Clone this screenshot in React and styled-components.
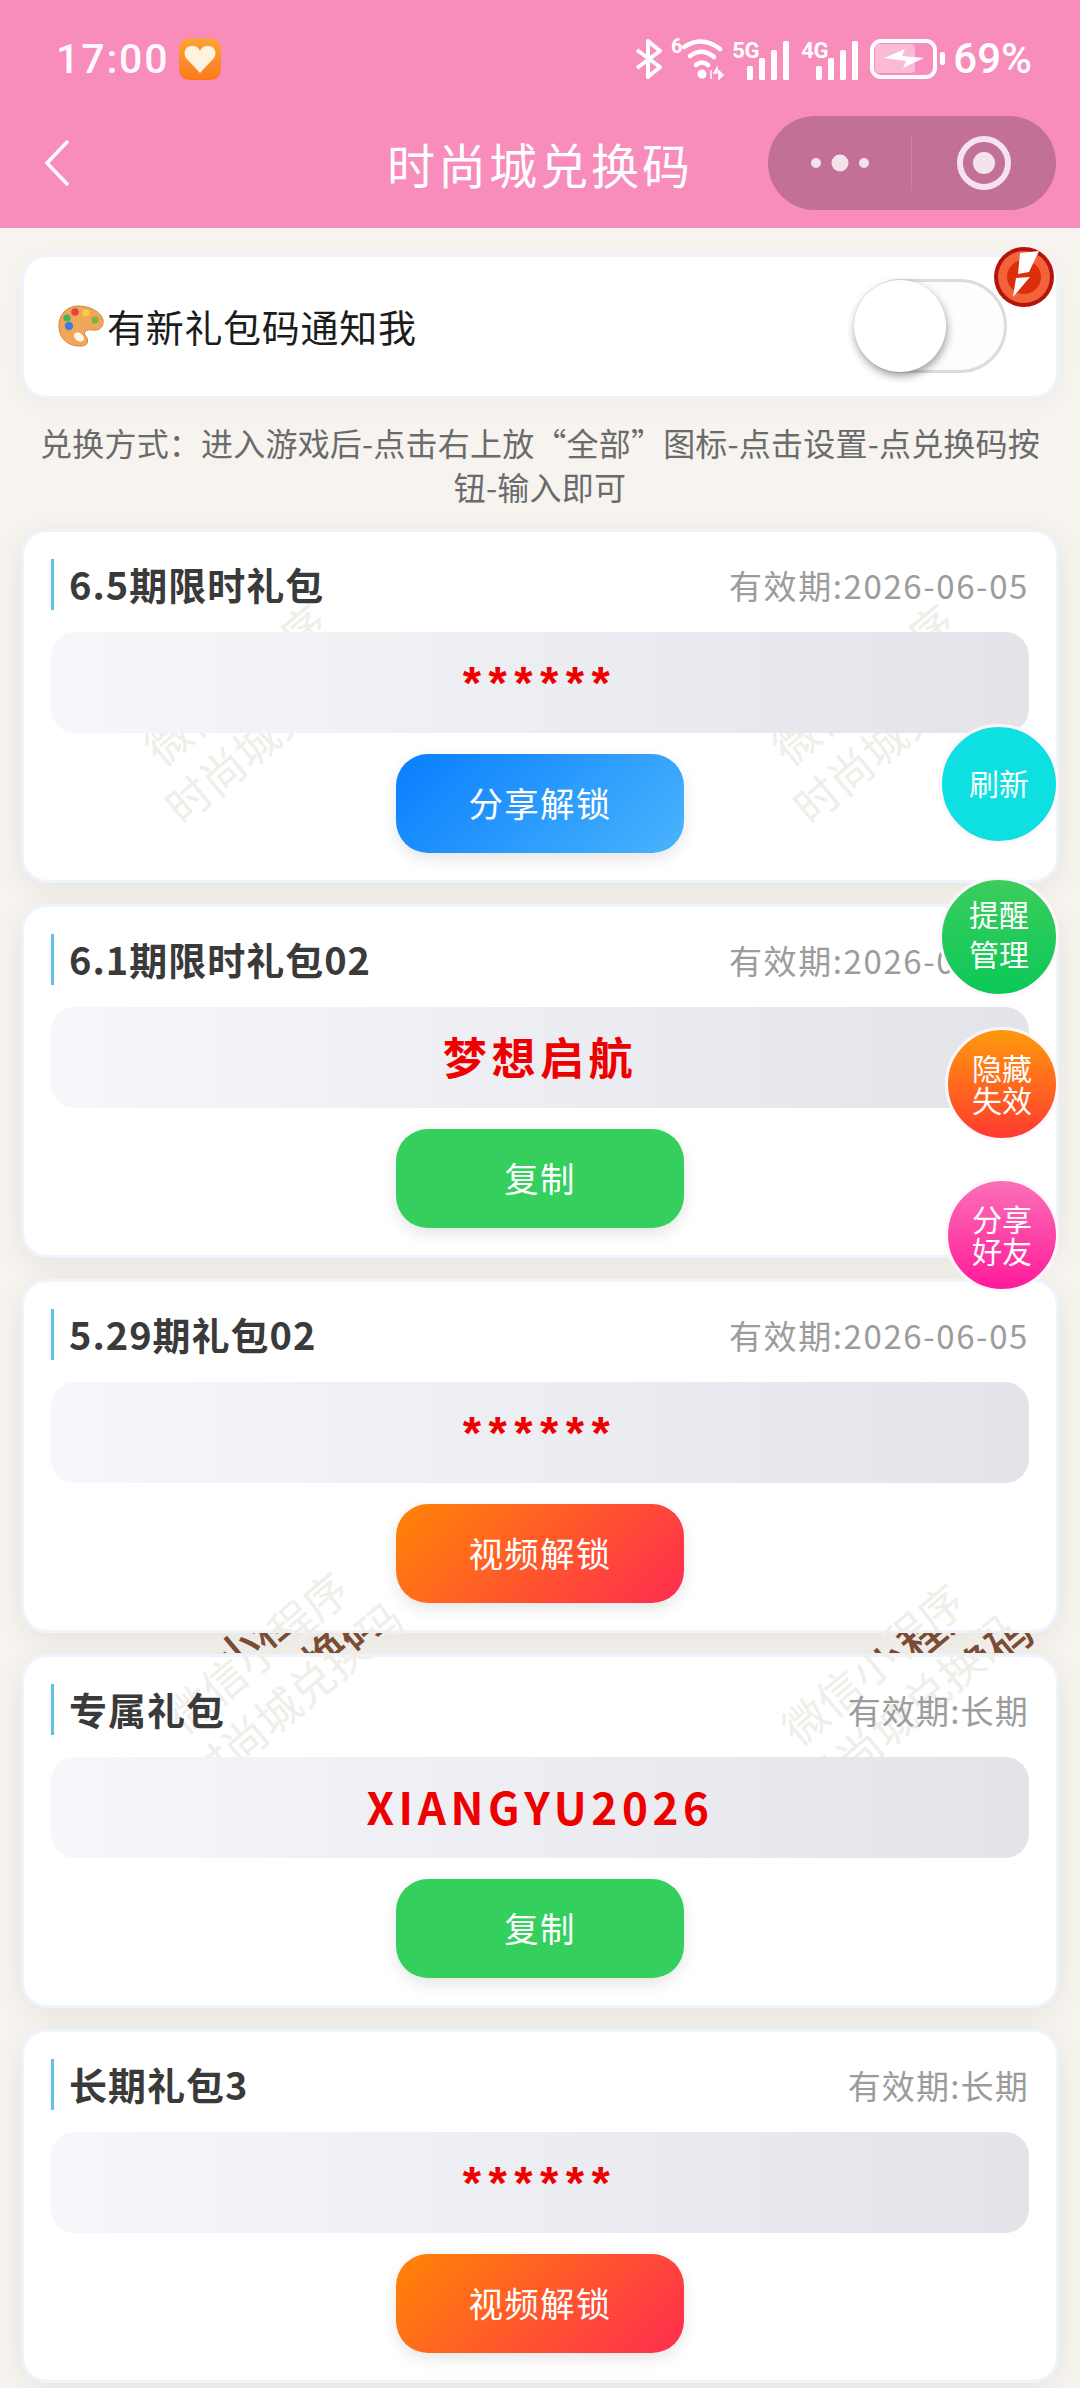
import React from "react";
import styled, { createGlobalStyle } from "styled-components";

const GlobalStyle = createGlobalStyle`
  html, body {
    margin: 0;
    padding: 0;
    background: #f7f4f0;
  }
  * {
    box-sizing: border-box;
  }
  body {
    font-family: "Noto Sans CJK SC", "Noto Sans", sans-serif;
  }
`;

const Page = styled.div`
  position: relative;
  width: 1080px;
  height: 2388px;
  overflow: hidden;
  background: #f7f4f0;
`;

const Header = styled.header`
  height: 228px;
  background: #f88cbb;
  color: #fff;
`;

const StatusBar = styled.div`
  height: 116px;
  padding: 38px 48px 0 56px;
  display: flex;
  justify-content: space-between;
  align-items: flex-start;
`;

const StatusLeft = styled.div`
  display: flex;
  align-items: center;
  gap: 9px;
`;

const Time = styled.span`
  font-family: "Roboto", sans-serif;
  font-size: 41px;
  line-height: 42px;
  letter-spacing: 1.9px;
  font-weight: 500;
  opacity: 0.95;
`;

const StatusRight = styled.div`
  display: flex;
  align-items: center;
  height: 42px;
`;

const SignalGroup = styled.div`
  position: relative;
  width: 58px;
  height: 42px;
  margin-left: ${(p) => p.$gap}px;
`;

const SignalTag = styled.span`
  position: absolute;
  left: 0;
  top: 2px;
  font-family: "Roboto", sans-serif;
  font-weight: 700;
  font-size: 22px;
  line-height: 22px;
  letter-spacing: -0.5px;
`;

const SignalBars = styled.svg`
  position: absolute;
  right: 0;
  top: 3px;
`;

const Percent = styled.span`
  font-family: "Roboto", sans-serif;
  font-size: 42px;
  font-weight: 500;
  line-height: 42px;
  margin-left: 7px;
`;

const NavBar = styled.div`
  height: 94px;
  padding: 0 24px;
  display: grid;
  grid-template-columns: 1fr auto 1fr;
  align-items: center;
`;

const BackIcon = styled.svg`
  margin-left: 20px;
`;

const NavTitle = styled.div`
  font-size: 48px;
  letter-spacing: 3px;
  line-height: 94px;
`;

const Capsule = styled.div`
  justify-self: end;
  width: 288px;
  height: 94px;
  border-radius: 47px;
  background: #c27096;
  display: grid;
  grid-template-columns: 143px 1px 1fr;
  align-items: center;
  justify-items: center;
`;

const CapsuleLine = styled.div`
  width: 1px;
  height: 56px;
  background: rgba(255, 255, 255, 0.12);
`;

const Body = styled.main`
  padding: 26px 21px 0;
`;

const NoticeCard = styled.section`
  position: relative;
  height: 145px;
  padding: 0 49px 2px 34px;
  display: flex;
  align-items: center;
  justify-content: space-between;
  background: #fff;
  border: 3px solid #edf4fc;
  border-radius: 26px;
  box-shadow: 0 6px 24px rgba(0, 0, 0, 0.035);
`;

const NoticeLabel = styled.div`
  display: flex;
  align-items: center;
  gap: 3px;
  font-size: 38px;
  letter-spacing: 0.7px;
  color: #1c1c1c;
`;

const Toggle = styled.div`
  position: relative;
  width: 153px;
  height: 94px;
  border: 3px solid #dcdcdc;
  border-radius: 47px;
  background: #fdfdfd;
`;

const ToggleKnob = styled.div`
  position: absolute;
  left: -3px;
  top: -2px;
  width: 92px;
  height: 92px;
  border-radius: 50%;
  background: #fff;
  box-shadow: 1px 4px 8px rgba(0, 0, 0, 0.38);
`;

const Badge = styled.svg`
  position: absolute;
  right: 0;
  top: -12px;
`;

const Hint = styled.p`
  margin: 21px 0 0;
  padding: 0 14px;
  text-align: center;
  font-size: 32px;
  line-height: 44px;
  letter-spacing: 0.2px;
  color: #6b6b6b;
`;

const CardList = styled.div`
  margin-top: 21px;
  display: flex;
  flex-direction: column;
  gap: 21px;
`;

const Card = styled.article`
  height: 354px;
  padding: 27px 27px 0;
  background: #fff;
  border: 3px solid #edf4fc;
  border-radius: 26px;
  box-shadow: 0 6px 30px rgba(0, 0, 0, 0.07);
`;

const CardHead = styled.div`
  position: relative;
  z-index: 2;
  height: 51px;
  display: flex;
  align-items: center;
  justify-content: space-between;
`;

const CardTitle = styled.h3`
  margin: 0;
  padding: 0 0 2px 15px;
  border-left: 3px solid #62c1e6;
  font-size: 38px;
  line-height: 49px;
  letter-spacing: 1px;
  font-weight: 700;
  color: #3a3a3a;
`;

const Expiry = styled.span`
  font-size: 33px;
  font-weight: 400;
  color: #9c9c9c;
  letter-spacing: ${(p) => (p.$wide ? 1.6 : 1.2)}px;
`;

const CodeBox = styled.div`
  position: relative;
  z-index: 2;
  margin-top: 22px;
  height: 101px;
  padding-bottom: 3px;
  border-radius: 24px;
  background: linear-gradient(90deg, #f6f7fb, #e3e4e9);
  display: flex;
  align-items: center;
  justify-content: center;
  color: #ee0000;
  font-weight: 700;
  font-size: 44px;
  letter-spacing: 4.6px;
`;

const Stars = styled.span`
  font-family: "Liberation Sans", sans-serif;
  font-size: 47px;
  letter-spacing: 7.5px;
  line-height: 40px;
  height: 40px;
  margin-top: 4px;
`;

const GIFT_GRADIENTS = {
  share: "linear-gradient(135deg, #087eff, #4ab4fb)",
  copy: "#34cf5c",
  video: "linear-gradient(135deg, #ff8505, #ff2c50)",
};

const ActionButton = styled.button`
  position: relative;
  z-index: 2;
  display: block;
  margin: 21px auto 0;
  width: 288px;
  height: 99px;
  padding: 0 0 3px;
  border: none;
  border-radius: 32px;
  background: ${(p) => GIFT_GRADIENTS[p.$kind]};
  box-shadow: 0 6px 16px rgba(0, 0, 0, 0.1);
  color: #fff;
  font-family: inherit;
  font-size: 34.5px;
  letter-spacing: 1.2px;
`;

const Watermark = styled.div`
  position: absolute;
  z-index: 1;
  left: ${(p) => p.$x}px;
  top: ${(p) => p.$y}px;
  width: 340px;
  margin: -58px 0 0 -170px;
  transform: rotate(-40deg);
  text-align: center;
  font-size: 44px;
  line-height: 58px;
  color: ${(p) => p.$color || "#f1eeea"};
  font-weight: ${(p) => (p.$color ? 500 : 400)};
  white-space: nowrap;
  pointer-events: none;
`;

const InkStrip = styled.div`
  position: absolute;
  z-index: 1;
  top: 1633px;
  left: 0;
  width: 1080px;
  height: 20px;
  overflow: hidden;
`;

const FloatButton = styled.div`
  position: absolute;
  z-index: 3;
  left: ${(p) => p.$x}px;
  top: ${(p) => p.$y}px;
  width: ${(p) => p.$size}px;
  height: ${(p) => p.$size}px;
  padding-bottom: ${(p) => p.$lift}px;
  border: 3px solid #fdf6fa;
  border-radius: 50%;
  background: ${(p) => p.$bg};
  color: #fff;
  display: flex;
  align-items: center;
  justify-content: center;
  text-align: center;
  font-size: 30px;
  line-height: ${(p) => p.$lh}px;
`;

const Bars = () => (
  <SignalBars width="44" height="39" viewBox="0 0 44 39" fill="#fff">
    <rect x="1" y="25" width="6" height="14" rx="1.5" />
    <rect x="13" y="17" width="6" height="22" rx="1.5" />
    <rect x="25" y="9" width="6" height="30" rx="1.5" />
    <rect x="37" y="0" width="6" height="39" rx="1.5" />
  </SignalBars>
);

const StatusIcons = () => (
  <StatusRight>
    <svg width="28" height="42" viewBox="0 0 28 42" fill="none" stroke="#fff" strokeWidth="4">
      <path d="M2 12 L25 29 L13 39 V3 L25 13 L2 30" strokeLinejoin="round" />
    </svg>
    <svg width="54" height="42" viewBox="0 0 54 42" fill="none" style={{ marginLeft: 8 }}>
      <text x="0" y="15" fill="#fff" fontFamily="Roboto" fontWeight="700" fontSize="20">6</text>
      <g stroke="#fff" strokeWidth="4.5" strokeLinecap="round">
        <path d="M13 9 Q31 -3 49 11" />
        <path d="M19 18 Q31 9 43 19" />
        <path d="M25 27 Q31 22 37 27" />
      </g>
      <circle cx="31" cy="36" r="4.5" fill="#fff" />
      <path d="M40 32 v9 M46 30 l-3 5 h3 z M48 33 v8 l4 -4 z" stroke="#fff" strokeWidth="1.5" fill="#fff" />
    </svg>
    <SignalGroup $gap={7}>
      <SignalTag>5G</SignalTag>
      <Bars />
    </SignalGroup>
    <SignalGroup $gap={11}>
      <SignalTag>4G</SignalTag>
      <Bars />
    </SignalGroup>
    <svg width="76" height="42" viewBox="0 0 76 42" fill="none" style={{ marginLeft: 11 }}>
      <rect x="5" y="6" width="40" height="29" rx="4" fill="#fff" fillOpacity="0.4" />
      <rect x="2" y="3" width="63" height="36" rx="9" stroke="#fff" strokeWidth="4" />
      <rect x="70" y="14" width="5" height="13" rx="2" fill="#fff" />
      <path d="M14 20 L35 11 L32 18 L54 20 L33 30 L36 23 Z" fill="#fff" />
    </svg>
    <Percent>69%</Percent>
  </StatusRight>
);

const PaletteIcon = () => (
  <svg width="46" height="42" viewBox="0 0 46 42">
    <path d="M20 1 C8 1 0 11 1 23 C2 35 12 42 24 41 C32 40 30 33 27 30 C25 26 30 24 35 25 C42 26 46 21 45 15 C43 7 32 1 20 1 Z" fill="#f2a65a" stroke="#d4843a" strokeWidth="1" />
    <circle cx="11" cy="21" r="4.2" fill="#3f7fd8" />
    <circle cx="9" cy="13" r="3.6" fill="#41b35a" />
    <circle cx="17" cy="7" r="3.8" fill="#e2433b" />
    <circle cx="28" cy="8" r="3.6" fill="#f5d33f" />
    <circle cx="37" cy="15" r="3.6" fill="#7ab63a" />
    <ellipse cx="21" cy="32" rx="5.5" ry="4" fill="#fff6e8" transform="rotate(35 21 32)" />
  </svg>
);

const GIFTS = [
  { title: "6.5期限时礼包", expiry: "有效期:2026-06-05", wide: true, stars: true, action: "分享解锁", kind: "share" },
  { title: "6.1期限时礼包02", expiry: "有效期:2026-06-05", wide: true, code: "梦想启航", action: "复制", kind: "copy" },
  { title: "5.29期礼包02", expiry: "有效期:2026-06-05", wide: true, stars: true, action: "视频解锁", kind: "video" },
  { title: "专属礼包", expiry: "有效期:长期", code: "XIANGYU2026", action: "复制", kind: "copy" },
  { title: "长期礼包3", expiry: "有效期:长期", stars: true, action: "视频解锁", kind: "video" },
];

const WATERMARKS = [
  { x: 253, y: 705 },
  { x: 881, y: 705 },
  { x: 275, y: 1673 },
  { x: 890, y: 1685 },
];

const FLOATS = [
  { x: 939, y: 724, size: 120, lh: 40, lift: 5, bg: "#0ee0e2", lines: ["刷新"] },
  { x: 939, y: 877, size: 120, lh: 40, lift: 8, bg: "linear-gradient(180deg, #3ccd5c, #0bc858)", lines: ["提醒", "管理"] },
  { x: 945, y: 1027, size: 114, lh: 32, lift: 2, bg: "linear-gradient(180deg, #ff9a0c, #ff3a30)", lines: ["隐藏", "失效"] },
  { x: 945, y: 1178, size: 114, lh: 32, lift: 3, bg: "linear-gradient(180deg, #fb70b6, #ff1a9a)", lines: ["分享", "好友"] },
];

const WatermarkText = () => (
  <>
    微信小程序
    <br />
    时尚城兑换码
  </>
);

const App = () => (
  <Page>
    <GlobalStyle />
    <Header>
      <StatusBar>
        <StatusLeft>
          <Time>17:00</Time>
          <svg width="42" height="42" viewBox="0 0 42 42">
            <defs>
              <linearGradient id="appIcon" x1="0" y1="0" x2="0" y2="1">
                <stop offset="0" stopColor="#fda33a" />
                <stop offset="1" stopColor="#fb7a1c" />
              </linearGradient>
            </defs>
            <rect width="42" height="42" rx="10" fill="url(#appIcon)" />
            <path d="M21 35 L7 20 C3 13 8 7 14 8 C17 8 20 10 21 13 C22 10 25 8 28 8 C34 7 39 13 35 20 Z" fill="#fff3df" />
          </svg>
        </StatusLeft>
        <StatusIcons />
      </StatusBar>
      <NavBar>
        <BackIcon width="26" height="46" viewBox="0 0 26 46" fill="none" stroke="#fff" strokeWidth="3.5">
          <path d="M24 1 L3 23 L24 45" />
        </BackIcon>
        <NavTitle>时尚城兑换码</NavTitle>
        <Capsule>
          <svg width="60" height="20" viewBox="0 0 60 20" fill="#f4e3ec">
            <circle cx="6" cy="10" r="5" />
            <circle cx="30" cy="10" r="8.5" />
            <circle cx="54" cy="10" r="5" />
          </svg>
          <CapsuleLine />
          <svg width="56" height="56" viewBox="0 0 56 56">
            <circle cx="28" cy="28" r="24" fill="none" stroke="#f4e3ec" strokeWidth="6" />
            <circle cx="28" cy="28" r="11" fill="#f4e3ec" />
          </svg>
        </Capsule>
      </NavBar>
    </Header>
    <Body>
      <NoticeCard>
        <NoticeLabel>
          <PaletteIcon />
          有新礼包码通知我
        </NoticeLabel>
        <Toggle>
          <ToggleKnob />
        </Toggle>
        <Badge width="64" height="64" viewBox="0 0 64 64">
          <circle cx="32" cy="32" r="30" fill="#b5140c" />
          <circle cx="32" cy="32" r="26" fill="#f2633a" />
          <circle cx="32" cy="32" r="17" fill="#dd2e0c" />
          <path d="M28 8 L47 6 L37 27 L26 29 Z M24 33 L38 32 L21 52 Z" fill="#fff" />
        </Badge>
      </NoticeCard>
      <Hint>兑换方式：进入游戏后-点击右上放“全部”图标-点击设置-点兑换码按钮-输入即可</Hint>
      <CardList>
        {GIFTS.map((gift) => (
          <Card key={gift.title}>
            <CardHead>
              <CardTitle>{gift.title}</CardTitle>
              <Expiry $wide={gift.wide}>{gift.expiry}</Expiry>
            </CardHead>
            <CodeBox>{gift.stars ? <Stars>******</Stars> : gift.code}</CodeBox>
            <ActionButton $kind={gift.kind}>{gift.action}</ActionButton>
          </Card>
        ))}
      </CardList>
    </Body>
    {WATERMARKS.map((mark) => (
      <Watermark key={`${mark.x}-${mark.y}`} $x={mark.x} $y={mark.y}>
        <WatermarkText />
      </Watermark>
    ))}
    <InkStrip>
      <Watermark $x={255} $y={40} $color="#7a4b35">
        <WatermarkText />
      </Watermark>
      <Watermark $x={905} $y={52} $color="#7a4b35">
        <WatermarkText />
      </Watermark>
    </InkStrip>
    {FLOATS.map((item) => (
      <FloatButton key={item.y} $x={item.x} $y={item.y} $size={item.size} $lh={item.lh} $lift={item.lift} $bg={item.bg}>
        <div>
          {item.lines.map((line) => (
            <div key={line}>{line}</div>
          ))}
        </div>
      </FloatButton>
    ))}
  </Page>
);

export default App;
